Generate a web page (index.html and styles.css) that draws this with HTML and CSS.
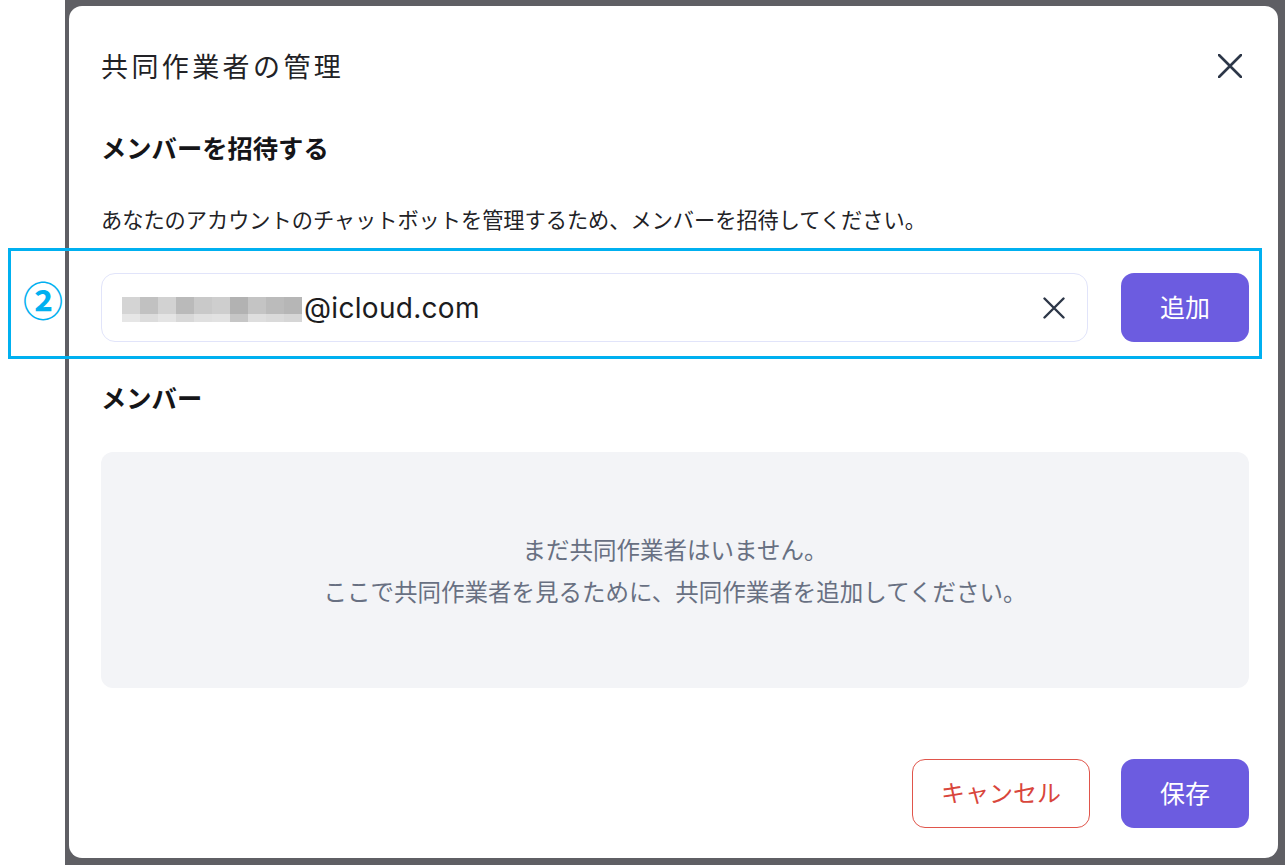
FILE: index.html
```html
<!DOCTYPE html>
<html lang="ja">
<head>
<meta charset="utf-8">
<title>共同作業者の管理</title>
<link rel="stylesheet" href="styles.css">
</head>
<body>
<div class="backdrop">
  <div class="dialog">
    <div class="title-row">
      <h1 class="title">共同作業者の管理</h1>
      <button class="close" aria-label="close">
        <svg width="24" height="24" viewBox="0 0 24 24"><path d="M1 1 L23 23 M23 1 L1 23" stroke="#2d3748" stroke-width="2.6" stroke-linecap="round" fill="none"/></svg>
      </button>
    </div>
    <h2 class="heading h-invite">メンバーを招待する</h2>
    <p class="desc">あなたのアカウントのチャットボットを管理するため、メンバーを招待してください。</p>
    <div class="invite-row">
      <div class="field">
        <span class="blur"><i></i><i></i><i></i><i></i><i></i><i></i><i></i><i></i><i></i><i></i></span><span class="email">@icloud.com</span>
        <span class="spacer"></span>
        <svg class="clear" width="22" height="22" viewBox="0 0 22 22"><path d="M1.5 1.5 L20.5 20.5 M20.5 1.5 L1.5 20.5" stroke="#2d3748" stroke-width="2.4" stroke-linecap="round" fill="none"/></svg>
      </div>
      <button class="btn primary btn-add">追加</button>
    </div>
    <h2 class="heading h-members">メンバー</h2>
    <div class="empty">
      <p>まだ共同作業者はいません。</p>
      <p>ここで共同作業者を見るために、共同作業者を追加してください。</p>
    </div>
    <div class="footer">
      <button class="btn cancel">キャンセル</button>
      <button class="btn primary btn-save">保存</button>
    </div>
  </div>
</div>
<div class="annot-box"></div>
<div class="annot-num">②</div>
</body>
</html>
```
FILE: styles.css
```css
* { box-sizing: border-box; }
html, body { margin: 0; padding: 0; background: #ffffff; }
body {
  width: 1285px;
  height: 865px;
  overflow: hidden;
  position: relative;
  font-family: "Noto Sans CJK JP", "Noto Sans", sans-serif;
  color: #1f1f23;
}
.backdrop {
  margin-left: 65px;
  height: 865px;
  background: #5f5f64;
  padding: 6px 7px 7px 4px;
}
.dialog {
  width: 1209px;
  height: 852px;
  background: #ffffff;
  border-radius: 13px;
  padding: 42px 29px 30px 32px;
  display: flex;
  flex-direction: column;
}
.title-row {
  display: flex;
  align-items: center;
  justify-content: space-between;
  height: 36px;
}
.title {
  margin: 0;
  font-size: 27px;
  line-height: 36px;
  font-weight: 400;
  letter-spacing: 3.4px;
  color: #222226;
}
.close {
  border: 0;
  background: none;
  padding: 0;
  margin-right: 7px;
  width: 24px;
  height: 24px;
  display: flex;
}
.heading {
  margin: 0;
  font-size: 25.3px;
  line-height: 36px;
  font-weight: 700;
  color: #151518;
}
.h-invite { margin-top: 45px; }
.desc {
  margin: 39px 0 0;
  font-size: 21.2px;
  line-height: 30px;
  color: #222226;
}
.invite-row {
  margin-top: 39px;
  display: flex;
  gap: 33px;
  height: 69px;
}
.field {
  flex: 1;
  border: 1.5px solid #e1e4fa;
  border-radius: 14px;
  display: flex;
  align-items: center;
  padding: 0 22px 0 20px;
}
.blur {
  display: flex;
  height: 25px;
  margin-top: 3px;
  margin-right: 2px;
}
.blur i {
  display: block;
  width: 18px;
  height: 25px;
}
.blur i:nth-child(1) { background: linear-gradient(#d4d4d4 0 68%, #e6e6e6 68%); }
.blur i:nth-child(2) { background: linear-gradient(#c1c1c1 0 68%, #dcdcdc 68%); }
.blur i:nth-child(3) { background: linear-gradient(#d2d2d2 0 68%, #e4e4e4 68%); }
.blur i:nth-child(4) { background: linear-gradient(#bababa 0 68%, #d8d8d8 68%); }
.blur i:nth-child(5) { background: linear-gradient(#c9c9c9 0 68%, #e0e0e0 68%); }
.blur i:nth-child(6) { background: linear-gradient(#cecece 0 68%, #e2e2e2 68%); }
.blur i:nth-child(7) { background: linear-gradient(#b2b2b2 0 68%, #c6c6c6 68%); }
.blur i:nth-child(8) { background: linear-gradient(#c4c4c4 0 68%, #dedede 68%); }
.blur i:nth-child(9) { background: linear-gradient(#bbbbbb 0 68%, #dadada 68%); }
.blur i:nth-child(10) { background: linear-gradient(#b6b6b6 0 68%, #d6d6d6 68%); }
.email {
  font-family: "Inter", "Noto Sans", sans-serif;
  font-size: 28px;
  letter-spacing: 0.3px;
  color: #1c1c20;
  line-height: 36px;
}
.spacer { flex: 1; }
.clear { display: block; }
.btn {
  border: 0;
  border-radius: 13px;
  font-family: "Noto Sans CJK JP", "Noto Sans", sans-serif;
  font-size: 25px;
  height: 69px;
  padding: 0 0 4px;
  display: flex;
  align-items: center;
  justify-content: center;
}
.primary {
  background: #6c5ce0;
  color: #ffffff;
}
.btn-add, .btn-save { width: 128px; }
.h-members { margin-top: 37px; }
.empty {
  margin-top: 37px;
  height: 236px;
  background: #f3f4f7;
  border-radius: 12px;
  display: flex;
  flex-direction: column;
  align-items: center;
  justify-content: center;
  color: #687082;
  font-size: 23.5px;
  line-height: 42px;
}
.empty p { margin: 0; }
.footer {
  margin-top: 71px;
  display: flex;
  justify-content: flex-end;
  gap: 31px;
}
.cancel {
  width: 178px;
  background: #ffffff;
  border: 1.5px solid #e0554b;
  color: #d9463c;
  font-size: 24px;
}
.annot-box {
  position: absolute;
  left: 8px;
  top: 248px;
  width: 1254px;
  height: 111px;
  border: 3px solid #00b0f0;
}
.annot-num {
  position: absolute;
  left: 22px;
  top: 276px;
  width: 42px;
  height: 46px;
  font-size: 40px;
  line-height: 46px;
  font-weight: 700;
  text-align: center;
  color: #00b0f0;
}
```
